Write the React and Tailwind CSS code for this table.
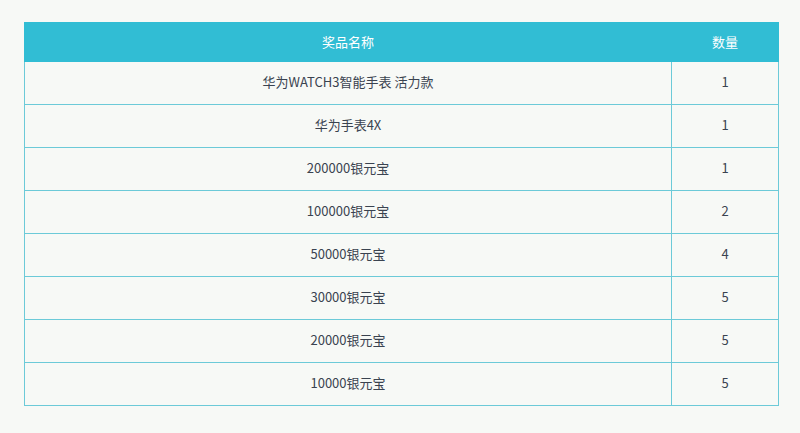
export default function App() {
  const rows = [
    ["华为WATCH3智能手表 活力款", "1"],
    ["华为手表4X", "1"],
    ["200000银元宝", "1"],
    ["100000银元宝", "2"],
    ["50000银元宝", "4"],
    ["30000银元宝", "5"],
    ["20000银元宝", "5"],
    ["10000银元宝", "5"],
  ];
  return (
    <div
      className="w-[800px] h-[433px] bg-[#f7f9f6] pt-[22px] pl-[24px]"
      style={{ fontFamily: '"Noto Sans CJK SC", "Noto Sans", sans-serif' }}
    >
      <table className="w-[755px] border-collapse text-[13px] table-fixed">
        <thead>
          <tr className="bg-[#31bdd4] text-white">
            <th className="h-[39px] font-normal border border-[#31bdd4] p-0">奖品名称</th>
            <th className="h-[39px] w-[107px] font-normal border border-[#31bdd4] p-0">数量</th>
          </tr>
        </thead>
        <tbody>
          {rows.map(([name, qty], i) => (
            <tr key={i} className="text-[#3a4350]">
              <td className="h-[43px] text-center border border-[#6ccad8] p-0 pb-[2px]">{name}</td>
              <td className="h-[43px] text-center border border-[#6ccad8] p-0 pb-[2px]">{qty}</td>
            </tr>
          ))}
        </tbody>
      </table>
    </div>
  );
}
